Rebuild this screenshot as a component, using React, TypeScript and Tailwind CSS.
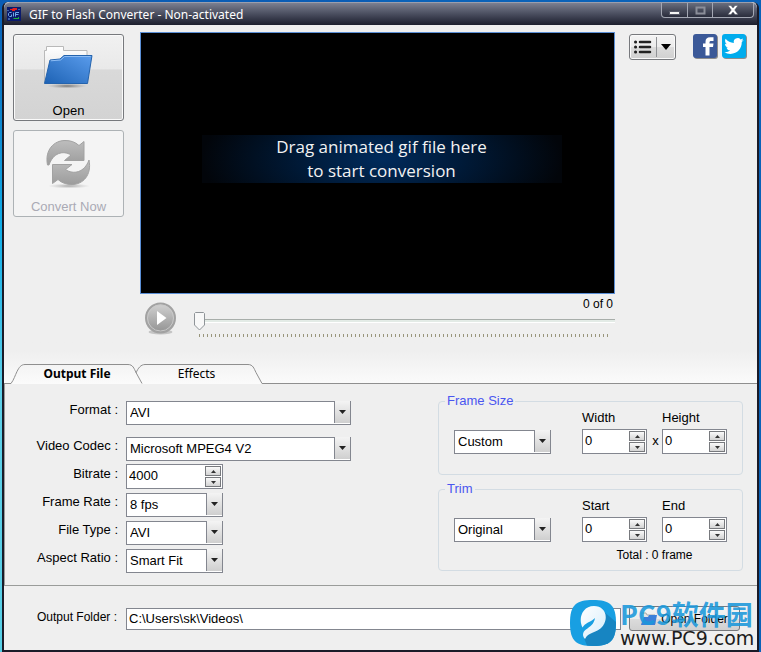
import { useState, type ReactNode } from "react";

function Select({ id, value, className }: { id: string; value: string; className: string }) {
  return (
    <div className={`relative h-6 ${className}`}>
      <select
        id={id}
        defaultValue={value}
        className="h-6 w-full appearance-none rounded-none border border-[#83868f] bg-white pr-5 pl-[3px] text-[13px] leading-4 text-black outline-none"
      >
        <option>{value}</option>
      </select>
      <span className="pointer-events-none absolute inset-y-px right-px flex w-4 items-center justify-center border-l border-[#83868f] bg-linear-to-b from-[#f4f4f4] to-[#cfcfcf]">
        <svg width="7" height="4" viewBox="0 0 7 4" aria-hidden="true">
          <path d="M0 0h7L3.500 4z" fill="#222" />
        </svg>
      </span>
    </div>
  );
}

function Spinner({ id, initial, className }: { id: string; initial: number; className: string }) {
  const [value, setValue] = useState(initial);
  const btn =
    "flex h-[10px] w-4 items-center justify-center border border-[#77797d] bg-linear-to-b from-[#fafafa] to-[#d4d4d4]";

  return (
    <div className={`flex h-[25px] items-center border border-[#83868f] bg-white pr-px ${className}`}>
      <input
        id={id}
        type="text"
        inputMode="numeric"
        value={value}
        onChange={(e) => setValue(Number(e.target.value) || 0)}
        className="h-[23px] w-full min-w-0 flex-1 pb-0.5 pl-[2px] text-[13px] leading-4 outline-none"
      />
      <div className="flex flex-col gap-px">
        <button type="button" aria-label="Increase" className={btn} onClick={() => setValue(value + 1)}>
          <svg width="5" height="3" viewBox="0 0 5 3" aria-hidden="true">
            <path d="M0 3h5L2.500 0z" fill="#333" />
          </svg>
        </button>
        <button type="button" aria-label="Decrease" className={btn} onClick={() => setValue(Math.max(0, value - 1))}>
          <svg width="5" height="3" viewBox="0 0 5 3" aria-hidden="true">
            <path d="M0 0h5L2.500 3z" fill="#333" />
          </svg>
        </button>
      </div>
    </div>
  );
}

function Row({ id, label, children }: { id: string; label: string; children: ReactNode }) {
  return (
    <div className="flex items-start gap-2">
      <label htmlFor={id} className="w-[113px] shrink-0 pt-0.5 text-right text-[13px] leading-4">
        {label}
      </label>
      {children}
    </div>
  );
}

function TitleBar() {
  return (
    <header className="flex h-[23px] items-start justify-between rounded-t-md border-t border-[#9a9fae] bg-linear-to-b from-[#7b8091] via-[#4a4e5f] to-[#1d1f2e]">
      <div className="flex h-[22px] items-center gap-2 pl-[3px]">
        <svg width="14" height="14" viewBox="0 0 14 14" aria-hidden="true">
          <rect width="14" height="14" fill="#0a1a6c" />
          <path d="M3 2h2l1-1h4v2H8v1H5V3H3z" fill="#e02020" />
          <path d="M7 11h4v-1h1v2H6z" fill="#1db33a" />
          <path
            d="M4.500 5.500h-2l-1 1v2l1 1h2v-2M6.500 5.500v4M8.500 9.500v-4H12M8.500 7.500h3M1 12h2M12 2v1M1 3v1"
            fill="none"
            stroke="#6fa8e8"
          />
        </svg>
        <h1 className="pt-px font-['Noto_Sans',sans-serif] text-xs leading-4 text-white">
          GIF to Flash Converter - Non-activated
        </h1>
      </div>
      <div className="mr-[3px] flex h-[15px] overflow-hidden rounded-b-sm border border-t-0 border-[#a3a7b3] bg-linear-to-b from-[#696e7e] to-[#2a2d3c]">
        <button type="button" aria-label="Minimize" className="flex w-[25px] items-end justify-center pb-[2px]">
          <svg width="11" height="4" viewBox="0 0 11 4" aria-hidden="true">
            <path d="M.5.5h10v3H.5z" fill="#f4f4f4" stroke="#555867" />
          </svg>
        </button>
        <button
          type="button"
          aria-label="Maximize"
          className="flex w-[26px] items-center justify-center border-x border-[#a3a7b3]"
        >
          <svg width="11" height="9" viewBox="0 0 11 9" aria-hidden="true">
            <path d="M1.500 1.500h8v6h-8z" fill="none" stroke="#8b8e99" strokeWidth="2" />
          </svg>
        </button>
        <button type="button" aria-label="Close" className="flex w-10 items-center justify-center">
          <svg width="12" height="10" viewBox="0 0 12 10" aria-hidden="true">
            <path d="M1 .5h3l2 2.500L8 .5h3L7.700 5 11 9.500H8L6 7 4 9.500H1L4.300 5z" fill="#fff" stroke="#555867" strokeWidth=".5" />
          </svg>
        </button>
      </div>
    </header>
  );
}

function FolderIcon() {
  return (
    <svg width="50" height="44" viewBox="0 0 50 44" aria-hidden="true">
      <defs>
        <linearGradient id="folder" x1="1" y1="0" x2="0" y2="1">
          <stop offset="0" stopColor="#5a9cec" />
          <stop offset="1" stopColor="#1d62b4" />
        </linearGradient>
        <linearGradient id="sheet" x1="0" y1="0" x2="0" y2="1">
          <stop offset="0" stopColor="#fff" />
          <stop offset="1" stopColor="#dcdcdc" />
        </linearGradient>
        <radialGradient id="folderShade">
          <stop offset="0" stopColor="#555" stopOpacity=".75" />
          <stop offset="1" stopColor="#888" stopOpacity="0" />
        </radialGradient>
      </defs>
      <ellipse cx="23" cy="41" rx="20" ry="2.500" fill="url(#folderShade)" />
      <path d="M.5 38V5.500h2v-4h17v4H43V14l-6 22z" fill="url(#sheet)" stroke="#b9b9b9" />
      <path d="M.5 38.500 6 15l10-1 4-3.500h28L43.500 38.500z" fill="url(#folder)" stroke="#2463ad" />
      <path d="m6.600 15.800 10-.8 4-3.500h26" fill="none" stroke="#8dbdf5" />
    </svg>
  );
}

function ConvertIcon() {
  return (
    <svg width="48" height="50" viewBox="0 0 48 50" aria-hidden="true">
      <defs>
        <linearGradient id="arrows" x1="0" y1="0" x2="0" y2="1">
          <stop offset="0" stopColor="#bdbdbd" />
          <stop offset="1" stopColor="#9c9c9c" />
        </linearGradient>
        <radialGradient id="arrowShade">
          <stop offset="0" stopColor="#888" stopOpacity=".7" />
          <stop offset="1" stopColor="#aaa" stopOpacity="0" />
        </radialGradient>
      </defs>
      <ellipse cx="24" cy="47" rx="21" ry="2.500" fill="url(#arrowShade)" />
      <g fill="url(#arrows)" stroke="#a2a2a2">
        <path d="M2.500 26C-.5 11 9 1.500 20 1.500c6 0 10 1.500 14 5l5-4V21.500H19.500l6.500-5.500c-8-5-18-2-22 10z" />
        <path d="M44 21C47 36 38 45.500 27 45.500c-6 0-10-1.500-14-5l-5.500 4V25.500H27l-6.500 5c8 5.500 19 3 23.500-9.500z" />
      </g>
    </svg>
  );
}

function Toolbar() {
  return (
    <div className="flex flex-col gap-[9px]">
      <button
        type="button"
        className="flex h-[87px] w-[111px] flex-col items-center justify-between rounded-[3px] border border-[#77797d] bg-[linear-gradient(#f1f1f1,#e9e9e9_40%,#d9d9d9_41%,#d3d3d3)] pt-[10px] pb-px text-[13px] leading-4 text-black shadow-[inset_0_0_0_1px_#fafafa]"
      >
        <FolderIcon />
        Open
      </button>
      <button
        type="button"
        disabled
        className="flex h-[87px] w-[111px] flex-col items-center justify-between rounded-[3px] border border-[#adb2b5] bg-[#f4f4f4] pt-2 pb-px text-[13px] leading-4 text-[#aaaab4]"
      >
        <ConvertIcon />
        Convert Now
      </button>
    </div>
  );
}

function Timeline() {
  const [frame, setFrame] = useState(0);

  return (
    <div className="relative">
      <input
        type="range"
        aria-label="Frame position"
        min="0"
        max="100"
        value={frame}
        onChange={(e) => setFrame(Number(e.target.value))}
        className="block h-5 w-full appearance-none bg-[linear-gradient(#a8aeaa_1px,#e3ebe6_1px,#e3ebe6_3px,#fff_3px)] bg-size-[100%_4px] bg-position-[0_7px] bg-no-repeat [&::-webkit-slider-thumb]:h-[18px] [&::-webkit-slider-thumb]:w-[11px] [&::-webkit-slider-thumb]:appearance-none"
      />
      <svg
        width="11"
        height="19"
        viewBox="0 0 11 19"
        className="pointer-events-none absolute top-0"
        style={{ left: `calc(${frame}% - ${frame * 0.11}px)` }}
        aria-hidden="true"
      >
        <path d="M1.500.5h8l1 1v11.500l-5 5-5-5V1.500z" fill="#f8f8f8" stroke="#8f9498" />
      </svg>
    </div>
  );
}

function Preview() {
  return (
    <section className="min-w-0 flex-1">
      <div className="flex h-[262px] items-center justify-center border border-[#5b8fd6] bg-black pl-2">
        <p className="mb-2 w-[360px] bg-[radial-gradient(ellipse_50%_160%,#002b5c,#001a38_45%,#02050a)] text-center font-['Open_Sans',sans-serif] text-[17px] leading-6 text-[#f2f2f2]">
          Drag animated gif file here
          <br />
          to start conversion
        </p>
      </div>
      <div className="flex gap-[17px] pl-[5px]">
        <button type="button" aria-label="Play" className="mt-2 h-8 w-8 shrink-0">
          <svg width="32" height="33" viewBox="0 0 32 33" aria-hidden="true">
            <defs>
              <linearGradient id="play" x1="0" y1="0" x2="0" y2="1">
                <stop offset="0" stopColor="#d2d2d2" />
                <stop offset="1" stopColor="#929292" />
              </linearGradient>
            </defs>
            <ellipse cx="15.500" cy="30" rx="12" ry="2.500" fill="#c4c4c4" />
            <circle cx="15.500" cy="16" r="14.500" fill="url(#play)" stroke="#a2a2a2" strokeWidth="2" />
            <circle cx="15.500" cy="16" r="13" fill="none" stroke="#c9c9c9" />
            <path d="M12 9v14l9.500-7z" fill="#fff" />
          </svg>
        </button>
        <div className="min-w-0 flex-1">
          <p className="pt-0.5 pr-0.5 text-right text-xs leading-4">0 of 0</p>
          <Timeline />
          <div className="mt-[2px] mr-1 ml-[5px] h-[3px] bg-[repeating-linear-gradient(90deg,#99967c_0_1px,transparent_1px_4px)]" />
        </div>
      </div>
    </section>
  );
}

function Links() {
  return (
    <div className="flex w-[118px] shrink-0 items-start justify-between pt-0.5">
      <button
        type="button"
        aria-label="Menu"
        className="flex h-[26px] w-[47px] items-center rounded-[3px] border border-[#77797d] bg-[linear-gradient(#f4f4f4,#ececec_50%,#dcdcdc_51%,#d0d0d0)] pl-1 shadow-[inset_0_0_0_1px_#fafafa]"
      >
        <svg width="18" height="14" viewBox="0 0 18 14" aria-hidden="true">
          <path d="M1.500 2h.1M1.500 7h.1M1.500 12h.1" stroke="#222" strokeWidth="3" strokeLinecap="round" />
          <path d="M6 2h10M6 7h10M6 12h10" stroke="#222" strokeWidth="2.500" strokeLinecap="round" />
        </svg>
        <span className="mx-1 my-0.5 h-5 w-px bg-[#909296]" />
        <svg width="10" height="6" viewBox="0 0 10 6" aria-hidden="true">
          <path d="M0 0h10L5 6z" fill="#000" />
        </svg>
      </button>
      <div className="flex gap-1">
        <a href="#facebook" aria-label="Facebook">
          <svg width="25" height="25" viewBox="0 0 25 25" aria-hidden="true">
            <rect x="1" y="1" width="24" height="24" rx="3" fill="#8d8d8d" />
            <rect width="24" height="24" rx="3" fill="#3b5998" />
            <path
              d="M12.500 21.500V13H10V9.500h2.500V7.800c0-3 1.600-4.500 4.500-4.500h3.500V7h-2.300c-1.200 0-1.700.5-1.700 1.500v1h4l-.5 3.500h-3.500v8.500z"
              fill="#fff"
            />
          </svg>
        </a>
        <a href="#twitter" aria-label="Twitter">
          <svg width="25" height="25" viewBox="0 0 25 25" aria-hidden="true">
            <rect x="1" y="1" width="24" height="24" rx="3" fill="#8d8d8d" />
            <rect width="24" height="24" rx="3" fill="#00aced" />
            <path
              transform="translate(2.300 2.300) scale(.81)"
              d="M23.950 4.570a10 10 0 0 1-2.820.77 4.960 4.960 0 0 0 2.160-2.720c-.95.550-2 .950-3.130 1.190a4.920 4.920 0 0 0-8.380 4.480C7.690 8.090 4.070 6.130 1.640 3.160a4.820 4.820 0 0 0-.67 2.480c0 1.710.87 3.210 2.190 4.100a4.900 4.900 0 0 1-2.230-.62v.06a4.920 4.920 0 0 0 3.950 4.830 5 5 0 0 1-2.210.08 4.940 4.940 0 0 0 4.600 3.420A9.870 9.870 0 0 1 0 19.540a13.990 13.990 0 0 0 7.550 2.210c9.050 0 14-7.500 14-13.980 0-.21 0-.42-.02-.63a9.940 9.940 0 0 0 2.460-2.550z"
              fill="#fff"
            />
          </svg>
        </a>
      </div>
    </div>
  );
}

function Tabs() {
  return (
    <div className="bg-linear-to-b from-[#efefef] from-30% to-[#fbfbfb] pt-[27px]">
      <div
        role="tablist"
        className="relative flex h-5 items-start font-['Noto_Sans',sans-serif] text-xs leading-5 text-black"
      >
        <svg className="absolute inset-0 h-full w-full" aria-hidden="true">
          <g fill="none" stroke="#8f8f8f">
            <path d="M0 19.500h7c3-4 4-8 6-12s4-7 8-7h103c5 0 6 4 8 8l6 11" />
            <path d="M132 9c2-5 5-8.500 9-8.500h103c5 0 6 4 8 8l6 11h3" />
            <path d="M258 19.500h2000" />
          </g>
        </svg>
        <button type="button" role="tab" aria-selected="true" className="relative ml-2 w-[130px] font-bold">
          Output File
        </button>
        <button type="button" role="tab" aria-selected="false" className="relative w-[109px]">
          Effects
        </button>
      </div>
    </div>
  );
}

function Group({ title, children }: { title: string; children: ReactNode }) {
  return (
    <fieldset className="rounded-[4px] border border-[#d3dce3] px-[15px] pt-px">
      <legend className="-ml-[9px] px-0.5 text-[13px] leading-4 text-[#4a56f0]">{title}</legend>
      {children}
    </fieldset>
  );
}

function Settings() {
  return (
    <section className="flex items-start justify-between border-b border-l border-[#9a9c9a] pt-[9px] pr-[14px] pb-[13px]">
      <div className="flex flex-col gap-1 pt-[7px]">
        <Row id="format" label="Format :">
          <Select id="format" value="AVI" className="mb-2 w-[225px]" />
        </Row>
        <Row id="codec" label="Video Codec :">
          <Select id="codec" value="Microsoft MPEG4 V2" className="w-[225px]" />
        </Row>
        <Row id="bitrate" label="Bitrate :">
          <Spinner id="bitrate" initial={4000} className="-mb-px w-[97px]" />
        </Row>
        <Row id="rate" label="Frame Rate :">
          <Select id="rate" value="8 fps" className="w-[97px]" />
        </Row>
        <Row id="type" label="File Type :">
          <Select id="type" value="AVI" className="w-[97px]" />
        </Row>
        <Row id="aspect" label="Aspect Ratio :">
          <Select id="aspect" value="Smart Fit" className="w-[97px]" />
        </Row>
      </div>

      <div className="flex flex-col gap-[6px]">
        <Group title="Frame Size">
          <div className="flex items-end pb-5">
            <Select id="size" value="Custom" className="mr-[31px] mb-px w-[97px]" />
            <div className="flex flex-col gap-[3px] text-[13px] leading-4">
              <label htmlFor="width">Width</label>
              <Spinner id="width" initial={0} className="w-[65px]" />
            </div>
            <span className="w-[15px] pb-[5px] pl-0.5 text-center text-[13px] leading-4">x</span>
            <div className="flex flex-col gap-[3px] text-[13px] leading-4">
              <label htmlFor="height">Height</label>
              <Spinner id="height" initial={0} className="w-[65px]" />
            </div>
          </div>
        </Group>
        <Group title="Trim">
          <div className="flex items-end">
            <Select id="trim" value="Original" className="mr-[31px] mb-px w-[97px]" />
            <div className="mr-[15px] flex flex-col gap-[3px] text-[13px] leading-4">
              <label htmlFor="start">Start</label>
              <Spinner id="start" initial={0} className="w-[65px]" />
            </div>
            <div className="flex flex-col gap-[3px] text-[13px] leading-4">
              <label htmlFor="end">End</label>
              <Spinner id="end" initial={0} className="w-[65px]" />
            </div>
          </div>
          <p className="ml-32 pt-[5px] pb-[7px] text-center text-xs leading-4">Total : 0 frame</p>
        </Group>
      </div>
    </section>
  );
}

function Watermark() {
  return (
    <div className="pointer-events-none absolute right-1 bottom-1 flex items-center gap-1">
      <svg width="46" height="46" viewBox="0 0 46 46" aria-hidden="true">
        <defs>
          <linearGradient id="leaf" x1="0" y1="0" x2="1" y2="1">
            <stop offset="0" stopColor="#fff" />
            <stop offset="1" stopColor="#d5ecfa" />
          </linearGradient>
        </defs>
        <path d="M23 0C40 0 46 5 46 23S40 46 23 46 0 41 0 23 6 0 23 0z" fill="#189fe2" />
        <path d="M33 11 46 22c0 18-5 24-23 24-2 0-4 0-6-.4L14 38z" fill="#1785c2" />
        <path
          d="M15 39c-3-3-2.500-7 1-9.500 4-3 8-5 9-11.500-2 2-4 3-7 4.500s-4 3-5.500 5C8 19 12 6 24 6c8 0 13 6 11.500 14-1.500 7-6 10-12.500 12.500-4 1.500-6.500 3-8 6.500z"
          fill="url(#leaf)"
        />
      </svg>
      <div className="flex w-[133px] flex-col gap-0.5 whitespace-nowrap">
        <span className="font-['Noto_Sans_CJK_SC',sans-serif] text-[27px] leading-7 font-bold text-[#1b98db]/90">
          PC9软件园
        </span>
        <span className="font-['DejaVu_Sans',sans-serif] text-[19px] leading-4 text-[#1c1c1c]">www.PC9.com</span>
      </div>
    </div>
  );
}

export default function App() {
  return (
    <div className="flex min-h-screen flex-col bg-[linear-gradient(90deg,transparent_50%,#0a62b8_50%),linear-gradient(#0a5cb4,#12aee8_35%,#5fd0e8_60%,#58cfe6)] px-[2px] pt-[2px] font-['Liberation_Sans',Arial,sans-serif] text-black">
      <div className="relative flex flex-1 flex-col rounded-t-md border-x-2 border-b-2 border-[#1a1b28] bg-[#efefef]">
        <TitleBar />
        <main className="flex flex-1 flex-col">
          <div className="flex pt-[7px] pr-[10px] pl-[9px]">
            <div className="mr-4 pt-0.5">
              <Toolbar />
            </div>
            <Preview />
            <div className="ml-[14px]">
              <Links />
            </div>
          </div>
          <Tabs />
          <Settings />
          <footer className="flex items-center gap-2 pt-5 pr-[17px] pl-px">
            <label htmlFor="folder" className="w-[113px] pr-px pb-1 text-right text-xs leading-4">
              Output Folder :
            </label>
            <input
              id="folder"
              defaultValue="C:\Users\sk\Videos\"
              className="h-[22px] min-w-0 flex-1 border border-[#83868f] bg-white px-[2px] text-[13px] leading-4 outline-none"
            />
            <button
              type="button"
              className="flex h-[25px] w-[111px] items-center justify-center gap-1 rounded-[3px] border border-[#77797d] bg-[linear-gradient(#f4f4f4,#ececec_50%,#dcdcdc_51%,#d0d0d0)] text-xs leading-4"
            >
              <svg width="16" height="13" viewBox="0 0 16 13" aria-hidden="true">
                <path d="M0 12V1h5l1 2h8v9z" fill="#e3e3e3" stroke="#aaa" />
                <path d="M0 13 3 5h4l1-2h8l-2 10z" fill="#3c7fda" />
              </svg>
              Open Folder
            </button>
          </footer>
        </main>
        <Watermark />
      </div>
    </div>
  );
}
